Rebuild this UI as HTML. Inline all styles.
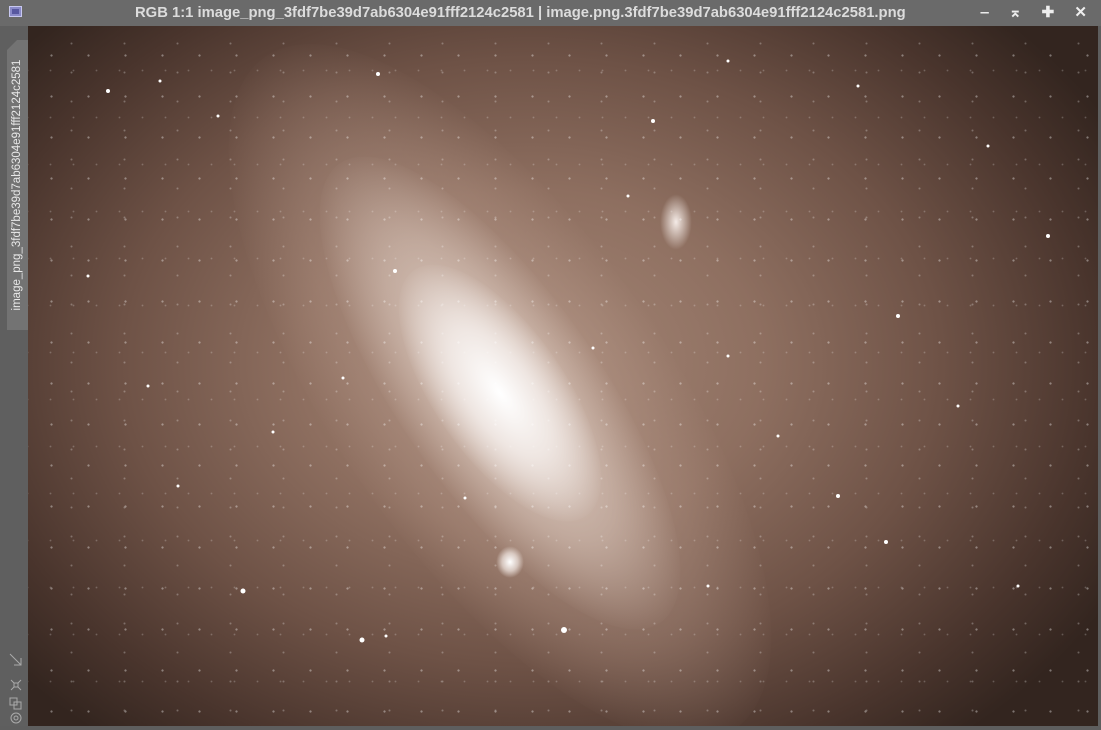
<!DOCTYPE html>
<html><head><style>
html,body{overflow:hidden;height:730px}
body{margin:0;width:1101px;height:730px;background:#5e5e5e;font-family:"Liberation Sans",sans-serif;position:relative}
.title{position:absolute;left:0;top:0;width:1101px;height:26px;background:#6a6a6a;color:#dcdcdc;font-weight:bold;font-size:14.8px;line-height:26px}
.title .t{position:absolute;left:135px;top:0;white-space:nowrap}
.ico{position:absolute;left:9px;top:6px;width:13px;height:11px;border:1px solid #c8c8f0;background:#8a8ac8;box-sizing:border-box}
.ico:after{content:"";position:absolute;left:2px;top:2px;width:7px;height:5px;background:#5858a0}
.btns{position:absolute;right:6px;top:0;color:#eee;font-size:15px;letter-spacing:8px}
.left{position:absolute;left:0;top:26px;width:28px;height:700px;background:#5f5f5f;overflow:hidden;contain:paint}
.tab{position:absolute;left:7px;top:14px;width:21px;height:290px;background:#737373;color:#e8e8e8;clip-path:polygon(0 10px,10px 0,100% 0,100% 100%,0 100%);overflow:hidden}
.tab span{position:absolute;left:-135px;top:135px;width:290px;transform:rotate(-90deg);font-size:11.5px;text-align:center;line-height:20px}
.img{position:absolute;left:28px;top:26px;width:1070px;height:700px;overflow:hidden;contain:paint;clip-path:inset(0);
background:radial-gradient(ellipse 62% 70% at 47% 48%,#a48676 0%,#8e6f60 35%,#6e5246 62%,#4a352d 85%,#33251f 100%)}
.stars{position:absolute;inset:0;opacity:.45;background-image:
radial-gradient(circle,rgba(255,255,255,.8) 0.8px,transparent 1.4px),
radial-gradient(circle,rgba(255,255,255,.6) 0.7px,transparent 1.3px),
radial-gradient(circle,rgba(255,255,255,.5) 0.6px,transparent 1.2px);
background-size:37px 41px,53px 29px,23px 47px;background-position:5px 9px,17px 3px,11px 21px}
.gal{position:absolute;left:472px;top:367px;width:0;height:0}
.gal div{position:absolute;border-radius:50%;transform:translate(-50%,-50%) rotate(55deg)}
.bottom{position:absolute;left:0;top:726px;width:1101px;height:4px;background:#5e5e5e}
</style></head><body>
<div class="title"><div class="ico"></div><span class="t">RGB 1:1 image_png_3fdf7be39d7ab6304e91fff2124c2581 | image.png.3fdf7be39d7ab6304e91fff2124c2581.png</span><div class="btns">‒ ⌅ ✚ ✕</div></div>
<div class="left"><div class="tab"><span>image_png_3fdf7be39d7ab6304e91fff2124c2581</span></div>
<svg style="position:absolute;left:8px;top:626px" width="16" height="74" fill="none" stroke="#aaa" stroke-width="1">
<path d="M2 2L13 13M6 13H13V6"/><path d="M3 28l3 3M13 28l-3 3M3 38l3-3M13 38l-3-3M6 31h4v4H6z"/><rect x="2" y="46" width="7" height="7"/><rect x="6" y="50" width="7" height="7"/><circle cx="8" cy="66" r="5"/><circle cx="8" cy="66" r="2"/></svg></div>
<div class="img">
<div class="gal">
<div style="width:820px;height:330px;background:radial-gradient(ellipse,rgba(200,172,158,.6) 0%,rgba(180,150,135,.35) 50%,rgba(160,130,115,0) 72%)"></div>
<div style="width:560px;height:200px;background:radial-gradient(ellipse,rgba(235,222,214,.85) 0%,rgba(215,196,185,.55) 45%,rgba(195,170,155,0) 72%)"></div>
<div style="width:300px;height:130px;background:radial-gradient(ellipse,#fff 0%,rgba(240,232,228,.95) 35%,rgba(235,225,220,0) 72%)"></div>
</div>
<div style="position:absolute;left:632px;top:168px;width:32px;height:56px;border-radius:50%;background:radial-gradient(ellipse,rgba(250,242,238,.95),rgba(200,180,170,0) 70%)"></div>
<div style="position:absolute;left:468px;top:520px;width:28px;height:32px;border-radius:50%;background:radial-gradient(ellipse,#fff 0%,rgba(240,230,225,.7) 40%,rgba(200,180,170,0) 70%)"></div>
<div class="stars"></div>
<svg width="1070" height="700" style="position:absolute;left:0;top:0" fill="#fff">
<circle cx="80" cy="65" r="2"/><circle cx="132" cy="55" r="1.5"/><circle cx="190" cy="90" r="1.5"/><circle cx="350" cy="48" r="2"/><circle cx="600" cy="170" r="1.5"/><circle cx="625" cy="95" r="2"/><circle cx="700" cy="35" r="1.5"/><circle cx="830" cy="60" r="1.5"/><circle cx="960" cy="120" r="1.5"/><circle cx="1020" cy="210" r="2"/><circle cx="870" cy="290" r="2"/><circle cx="930" cy="380" r="1.5"/><circle cx="810" cy="470" r="2"/><circle cx="858" cy="516" r="2"/><circle cx="990" cy="560" r="1.5"/><circle cx="215" cy="565" r="2.5"/><circle cx="334" cy="614" r="2.5"/><circle cx="358" cy="610" r="1.5"/><circle cx="536" cy="604" r="3"/><circle cx="120" cy="360" r="1.5"/><circle cx="60" cy="250" r="1.5"/><circle cx="245" cy="406" r="1.5"/><circle cx="315" cy="352" r="1.5"/><circle cx="437" cy="472" r="1.5"/><circle cx="367" cy="245" r="2"/><circle cx="565" cy="322" r="1.5"/><circle cx="700" cy="330" r="1.5"/><circle cx="750" cy="410" r="1.5"/><circle cx="680" cy="560" r="1.5"/><circle cx="150" cy="460" r="1.5"/>
</svg>
</div>
<div class="bottom"></div>
</body></html>
